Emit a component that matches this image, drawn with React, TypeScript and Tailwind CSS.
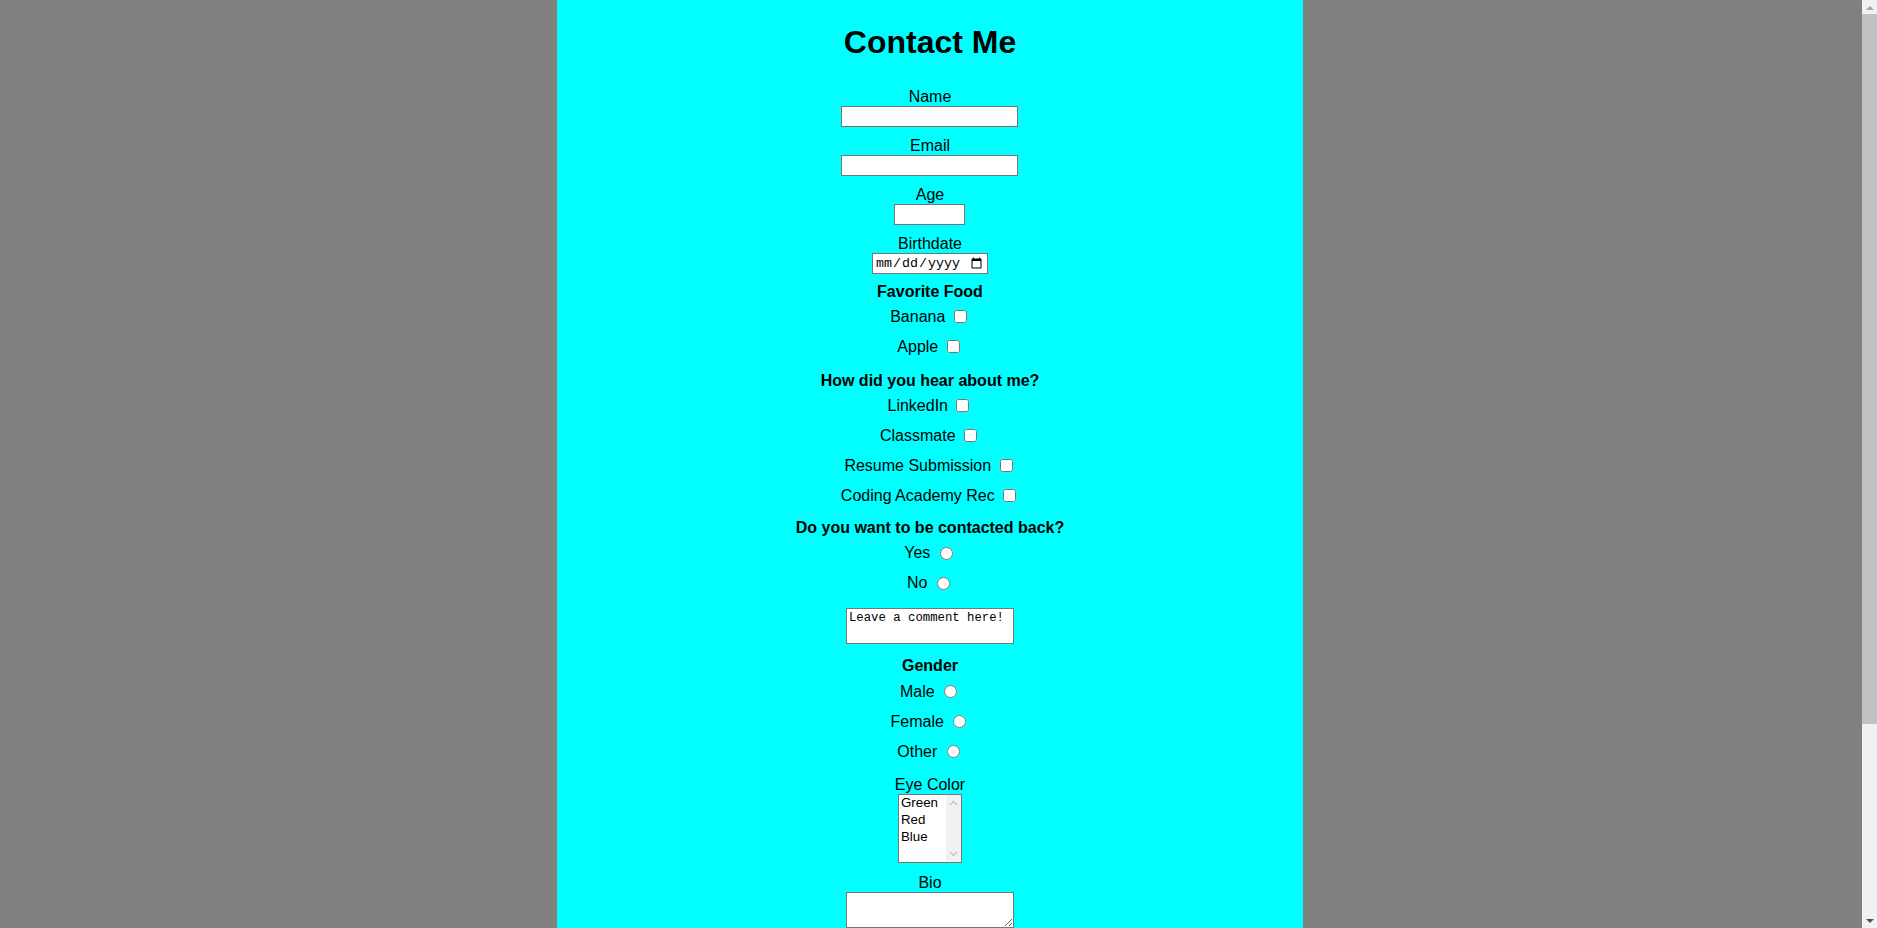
import React from "react";

function CheckRow({ label }: { label: string }) {
  return (
    <label className="flex h-[30px] items-center justify-center">
      <span>{label}</span>
      <input type="checkbox" className="ml-[8.45px] mr-[3px] h-[13px] w-[13px]" />
    </label>
  );
}

function RadioRow({ label, name }: { label: string; name: string }) {
  return (
    <label className="flex h-[30px] items-center justify-center">
      <span>{label}</span>
      <input type="radio" name={name} className="ml-[9.45px] mr-[3px] h-[13px] w-[13px]" />
    </label>
  );
}

function ListBox() {
  return (
    <div
      role="listbox"
      className="flex h-[69px] w-[64px] border border-[#767676] bg-white text-left text-[13.33px] leading-[15.3px]"
    >
      <div className="flex flex-1 flex-col">
        <div className="h-[17px] px-[2px]">Green</div>
        <div className="h-[17px] px-[2px]">Red</div>
        <div className="h-[17px] px-[2px]">Blue</div>
      </div>
      <div className="flex w-[15px] flex-col items-center justify-between bg-[#f1f1f1] py-[5px]">
        <svg width="9" height="6" viewBox="0 0 9 6">
          <path d="M1 5 L4.5 1.5 L8 5" fill="none" stroke="#c4c4c4" strokeWidth="1.4" />
        </svg>
        <svg width="9" height="6" viewBox="0 0 9 6">
          <path d="M1 1 L4.5 4.5 L8 1" fill="none" stroke="#c4c4c4" strokeWidth="1.4" />
        </svg>
      </div>
    </div>
  );
}

function PageScrollbar() {
  return (
    <div className="flex h-[928px] w-[15px] shrink-0 flex-col bg-[#f1f1f1]">
      <div className="flex h-[14px] items-center justify-center">
        <svg width="8" height="5" viewBox="0 0 8 5">
          <path d="M0 5 L4 1 L8 5 Z" fill="#a3a3a3" />
        </svg>
      </div>
      <div className="h-[710px] bg-[#c1c1c1]" />
      <div className="flex-1" />
      <div className="flex h-[14px] items-center justify-center">
        <svg width="8" height="5" viewBox="0 0 8 5">
          <path d="M0 0 L4 4 L8 0 Z" fill="#505050" />
        </svg>
      </div>
    </div>
  );
}

export default function App() {
  return (
    <div className="flex h-[928px] overflow-hidden bg-[#808080] font-['Liberation_Sans',Arial,sans-serif] text-[16px] leading-[normal] text-black">
      <div className="h-[928px] flex-1 overflow-hidden pr-[2px]">
        <div className="mx-auto flex min-h-[1176px] w-[746px] flex-col items-center bg-[#00ffff] text-center">
          <h1 className="mt-[24.2px] text-[32px] font-bold leading-[normal]">Contact Me</h1>

          <form className="flex flex-col items-center">
            <label className="mt-[26.6px] block">Name</label>
            <input type="text" className="h-[21px] w-[177px] border border-[#767676] bg-white px-[2px] text-[13.33px]" />

            <label className="mt-[10.2px] block">Email</label>
            <input type="email" className="h-[21px] w-[177px] border border-[#767676] bg-white px-[2px] text-[13.33px]" />

            <label className="mt-[10.2px] block">Age</label>
            <input type="number" className="h-[21px] w-[71px] border border-[#767676] bg-white px-[2px] text-[13.33px]" />

            <label className="mt-[9.6px] block">Birthdate</label>
            <input
              type="date"
              className="h-[21px] w-[116px] border border-[#767676] bg-white px-[2px] font-['Liberation_Mono',monospace] text-[13.33px]"
            />

            <div className="mb-[1.2px] mt-[9px] font-bold">Favorite Food</div>
            <CheckRow label="Banana" />
            <CheckRow label="Apple" />

            <div className="mb-[0.4px] mt-[10.2px] font-bold">How did you hear about me?</div>
            <CheckRow label="LinkedIn" />
            <CheckRow label="Classmate" />
            <CheckRow label="Resume Submission" />
            <CheckRow label="Coding Academy Rec" />

            <div className="mb-[0.8px] mt-[8.8px] font-bold">Do you want to be contacted back?</div>
            <RadioRow label="Yes" name="contact" />
            <RadioRow label="No" name="contact" />

            <textarea
              rows={2}
              defaultValue="Leave a comment here!"
              className="mt-[9.4px] h-[36px] w-[168px] resize-none border border-[#767676] bg-white px-[2px] py-[2px] font-['Liberation_Mono',monospace] text-[12.3px] leading-[normal]"
            />

            <div className="mb-[1.6px] mt-[13.8px] font-bold">Gender</div>
            <RadioRow label="Male" name="gender" />
            <RadioRow label="Female" name="gender" />
            <RadioRow label="Other" name="gender" />

            <label className="mt-[8.8px] block">Eye Color</label>
            <ListBox />

            <label className="mt-[11.4px] block">Bio</label>
            <textarea
              rows={2}
              className="h-[36px] w-[168px] resize border border-[#767676] bg-white px-[2px] py-[2px] font-['Liberation_Mono',monospace] text-[12.3px]"
            />

            <button
              type="submit"
              className="mt-[16px] border border-[#767676] bg-[#efefef] px-[6px] py-[1px] text-[13.33px]"
            >
              Submit
            </button>
          </form>
        </div>
      </div>
      <PageScrollbar />
    </div>
  );
}
